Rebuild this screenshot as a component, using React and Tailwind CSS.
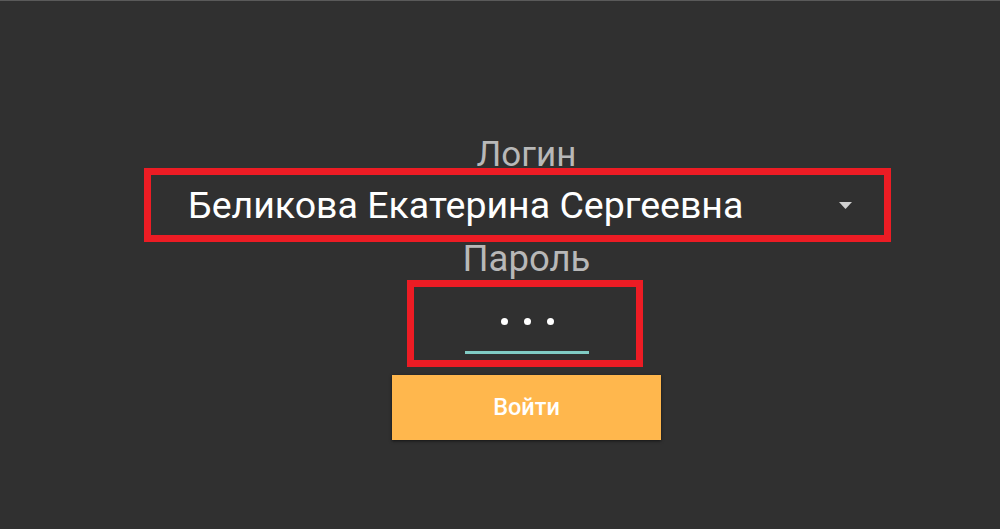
export default function App() {
  return (
    <div
      className="w-[1000px] h-[529px] bg-[#303030] border-t border-[#5a5a5a] overflow-hidden"
      style={{ fontFamily: "Roboto, 'Noto Sans', sans-serif" }}
    >
      <div className="flex flex-col items-center pt-[141px] pl-[53px]">
        {/* Login label */}
        <div className="h-[26px] leading-[26px] text-[35px] text-[#b8b8b8]">Логин</div>

        {/* Login spinner */}
        <div className="mr-[18px] w-[747px] h-[74px] border-[7px] border-[#ec1c24] flex items-center justify-between pl-[37px] pr-[32px]">
          <span className="text-[37.5px] leading-none text-white mt-[2px]">Беликова Екатерина Сергеевна</span>
          <svg width="13" height="7" viewBox="0 0 13 7" className="mt-[1px]">
            <polygon points="0,0 13,0 6.5,7" fill="#d0d0d0" />
          </svg>
        </div>

        {/* Password label */}
        <div className="mt-[1px] h-[32px] leading-[32px] text-[36.5px] text-[#b8b8b8]">Пароль</div>

        {/* Password field */}
        <div className="mt-[5px] mr-[3px] w-[236px] h-[87px] border-[7px] border-[#ec1c24] flex flex-col items-center">
          <div className="mt-[31px] flex gap-[16px] pl-[4px]">
            <span className="w-[7px] h-[7px] rounded-full bg-white" />
            <span className="w-[7px] h-[7px] rounded-full bg-white" />
            <span className="w-[7px] h-[7px] rounded-full bg-white" />
          </div>
          <div className="mt-[26px] ml-[4px] w-[124px] h-[3px] bg-[#80cbc4]" />
        </div>

        {/* Submit */}
        <button className="mt-[8px] w-[269px] h-[65px] bg-[#ffb74d] text-white text-[23.5px] font-medium shadow-[0_1px_3px_rgba(0,0,0,0.6)]">
          Войти
        </button>
      </div>
    </div>
  );
}
